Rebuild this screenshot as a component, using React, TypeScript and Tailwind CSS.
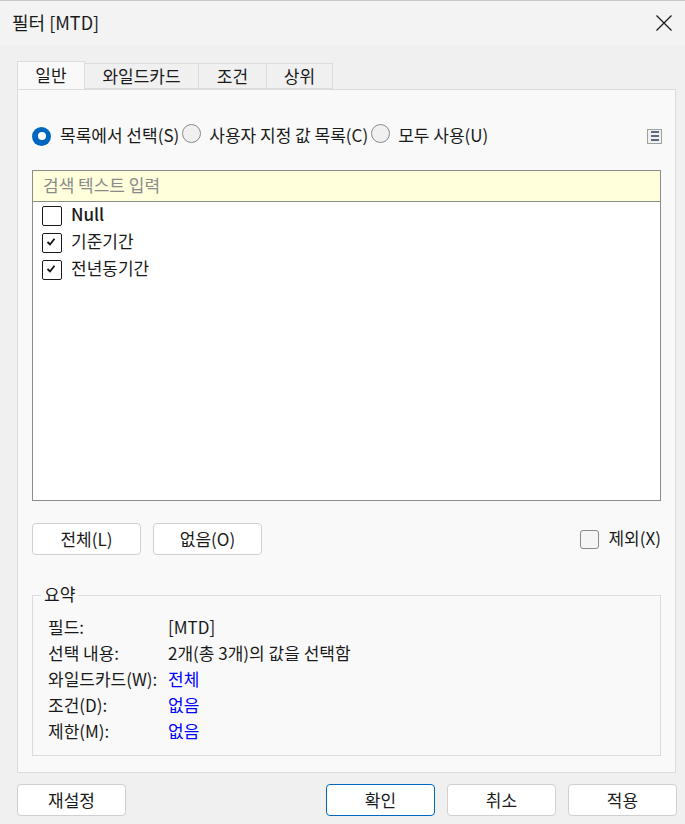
import React from "react";

const font = { fontFamily: '"Noto Sans CJK KR", "Noto Sans", sans-serif' };

function Radio({ checked }: { checked?: boolean }) {
  return checked ? (
    <span className="inline-flex h-[19px] w-[19px] items-center justify-center rounded-full bg-[#0067c0]">
      <span className="h-[8px] w-[8px] rounded-full bg-white" />
    </span>
  ) : (
    <span className="inline-block h-[19px] w-[19px] rounded-full border border-[#8a8a8a] bg-[#f0f0f0]" />
  );
}

function Check({ checked }: { checked?: boolean }) {
  return (
    <span className="inline-flex h-[20px] w-[20px] items-start justify-start rounded-[2px] border border-[#1a1a1a] bg-white pl-[3px] pt-[3px]">
      {checked && (
        <svg width="11" height="10" viewBox="0 0 11 10">
          <path d="M1.5 5 L4 7.5 L8.5 1.8" fill="none" stroke="#111" strokeWidth="1.8" />
        </svg>
      )}
    </span>
  );
}

function Btn({ children, primary, w = "w-[109px]" }: { children: React.ReactNode; primary?: boolean; w?: string }) {
  return (
    <button
      className={`${w} h-[32px] rounded-[4px] border bg-white pb-[2px] text-[17px] leading-none text-[#1a1a1a] ${
        primary ? "border-[#0067c0]" : "border-[#d0d0d0]"
      }`}
    >
      {children}
    </button>
  );
}

const T = ({ children, className = "" }: { children: React.ReactNode; className?: string }) => (
  <span className={`pb-[4px] leading-[17px] ${className}`}>{children}</span>
);

export default function App() {
  return (
    <div style={font} className="h-[824px] w-[685px] overflow-hidden bg-[#f0f0f0] text-[#1a1a1a]">
      {/* title bar */}
      <div className="flex h-[45px] items-center justify-between border-t border-[#c8c8c8] bg-[#f3f3f3] pl-[12px] pr-[6px]">
        <span className="pb-[2px] text-[18px] leading-none">필터 [MTD]</span>
        <svg width="18" height="18" viewBox="0 0 18 18" className="mr-[6px]">
          <path d="M1.5 1.5 L16.5 16.5 M16.5 1.5 L1.5 16.5" stroke="#1a1a1a" strokeWidth="1.3" />
        </svg>
      </div>

      {/* tabs */}
      <div className="mt-[16px] flex pl-[17px] text-[17px] leading-none">
        <div className="relative z-10 -mb-px flex h-[28px] w-[68px] items-center justify-center border border-b-0 border-[#dcdcdc] bg-[#f9f9f9] pb-[3px]">
          일반
        </div>
        <div className="mt-[2px] flex h-[26px] w-[114px] items-center justify-center border border-l-0 border-[#dcdcdc] bg-[#f0f0f0] pb-[2px]">
          와일드카드
        </div>
        <div className="mt-[2px] flex h-[26px] w-[68px] items-center justify-center border border-l-0 border-[#dcdcdc] bg-[#f0f0f0] pb-[2px]">
          조건
        </div>
        <div className="mt-[2px] flex h-[26px] w-[66px] items-center justify-center border border-l-0 border-[#dcdcdc] bg-[#f0f0f0] pb-[2px]">
          상위
        </div>
      </div>

      {/* panel */}
      <div className="mx-[17px] mr-[9px] h-[684px] border border-[#dcdcdc] bg-[#f9f9f9] px-[14px] pt-[33px]">
        {/* radio row */}
        <div className="flex h-[26px] items-center text-[17px]">
          <Radio checked />
          <T className="ml-[9px]">목록에서 선택(S)</T>
          <span className="ml-[3px]"><Radio /></span>
          <T className="ml-[8px]">사용자 지정 값 목록(C)</T>
          <span className="ml-[3px]"><Radio /></span>
          <T className="ml-[8px]">모두 사용(U)</T>
          <span className="ml-auto mr-[-1px] flex h-[15px] w-[15px] flex-col items-center justify-center gap-[2px] border border-[#a0a0a0] bg-[#f0f0f0]">
            <span className="h-[2px] w-[8px] bg-[#5a6a80]" />
            <span className="h-[2px] w-[8px] bg-[#5a6a80]" />
            <span className="h-[2px] w-[8px] bg-[#5a6a80]" />
          </span>
        </div>

        {/* search + list */}
        <div className="mt-[21px] border border-[#8c8c8c]">
          <div className="flex h-[31px] items-center border-b border-[#8c8c8c] bg-[#ffffdc] px-[10px] text-[17px] text-[#8a8a8a]">
            <T>검색 텍스트 입력</T>
          </div>
          <div className="h-[298px] bg-white pt-[0px] text-[17px]">
            <div className="flex h-[27px] items-center pl-[9px]">
              <Check />
              <T className="ml-[9px] font-medium">Null</T>
            </div>
            <div className="flex h-[27px] items-center pl-[9px]">
              <Check checked />
              <T className="ml-[9px]">기준기간</T>
            </div>
            <div className="flex h-[27px] items-center pl-[9px]">
              <Check checked />
              <T className="ml-[9px]">전년동기간</T>
            </div>
          </div>
        </div>

        {/* buttons row */}
        <div className="mt-[22px] flex items-center">
          <Btn>전체(L)</Btn>
          <span className="ml-[12px]"><Btn>없음(O)</Btn></span>
          <span className="ml-auto flex items-center text-[17px]">
            <span className="inline-block h-[19px] w-[19px] rounded-[3px] border border-[#8a8a8a] bg-[#f5f5f5]" />
            <T className="ml-[9px]">제외(X)</T>
          </span>
        </div>

        {/* summary */}
        <div className="relative mt-[40px] h-[161px] border border-[#dcdcdc] px-[15px] pt-[19px] text-[17px]">
          <span className="absolute left-[8px] top-[-14px] bg-[#f9f9f9] px-[3px] leading-[24px]">요약</span>
          {[
            ["필드:", "[MTD]", false],
            ["선택 내용:", "2개(총 3개)의 값을 선택함", false],
            ["와일드카드(W):", "전체", true],
            ["조건(D):", "없음", true],
            ["제한(M):", "없음", true],
          ].map(([k, v, blue], i) => (
            <div key={i} className="flex h-[26px] items-center">
              <T className="w-[120px] whitespace-nowrap">{k as string}</T>
              <T className={blue ? "text-[#0000ff]" : ""}>{v as string}</T>
            </div>
          ))}
        </div>
      </div>

      {/* bottom buttons */}
      <div className="mt-[11px] flex pl-[17px] pr-[8px]">
        <Btn>재설정</Btn>
        <span className="ml-auto"><Btn primary>확인</Btn></span>
        <span className="ml-[12px]"><Btn>취소</Btn></span>
        <span className="ml-[12px]"><Btn>적용</Btn></span>
      </div>
    </div>
  );
}
